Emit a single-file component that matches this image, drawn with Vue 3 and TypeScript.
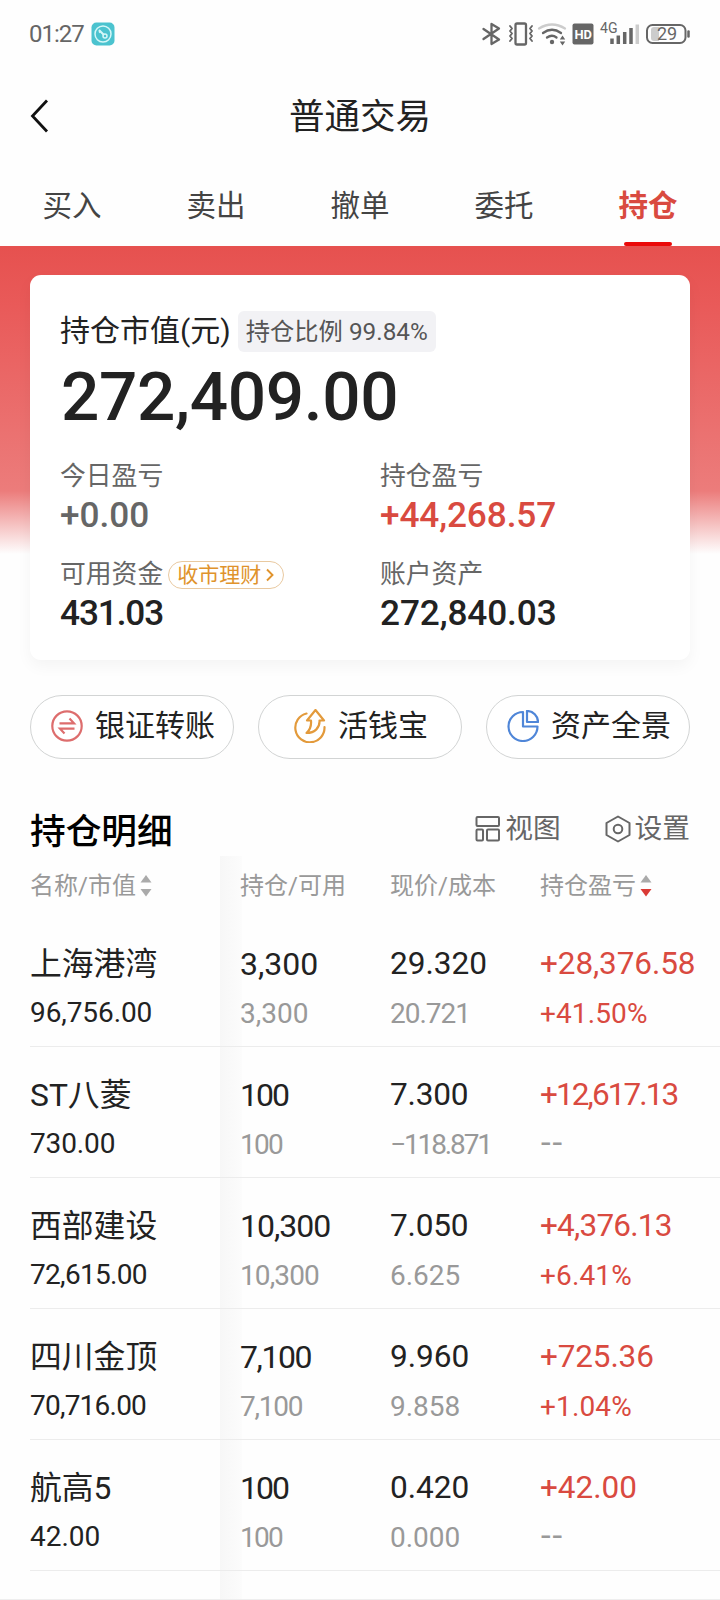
<script setup lang="ts">
interface Holding {
  name: string
  value: string
  amount: string
  usable: string
  price: string
  cost: string
  profit: string
  rate: string
}

interface Stat {
  label: string
  figure: string
  tone: string
  pill?: string
}

const tabs: string[] = ['买入', '卖出', '撤单', '委托', '持仓']
const activeTab = '持仓'

const stats: Stat[] = [
  { label: '今日盈亏', figure: '+0.00', tone: 'muted' },
  { label: '持仓盈亏', figure: '+44,268.57', tone: 'red' },
  { label: '可用资金', figure: '431.03', tone: '', pill: '收市理财' },
  { label: '账户资产', figure: '272,840.03', tone: '' },
]

const holdings: Holding[] = [
  { name: '上海港湾', value: '96,756.00', amount: '3,300', usable: '3,300', price: '29.320', cost: '20.721', profit: '+28,376.58', rate: '+41.50%' },
  { name: 'ST八菱', value: '730.00', amount: '100', usable: '100', price: '7.300', cost: '−118.871', profit: '+12,617.13', rate: '--' },
  { name: '西部建设', value: '72,615.00', amount: '10,300', usable: '10,300', price: '7.050', cost: '6.625', profit: '+4,376.13', rate: '+6.41%' },
  { name: '四川金顶', value: '70,716.00', amount: '7,100', usable: '7,100', price: '9.960', cost: '9.858', profit: '+725.36', rate: '+1.04%' },
  { name: '航高5', value: '42.00', amount: '100', usable: '100', price: '0.420', cost: '0.000', profit: '+42.00', rate: '--' },
]

function tracking(text: string) {
  const ones = text.split('1').length - 1
  const sevens = text.split('7').length - 1
  let extra = -ones * 0.19 - sevens * 0.03
  if (text.endsWith('%')) extra += 0.22
  return { letterSpacing: `${(extra / text.length).toFixed(4)}em` }
}
</script>

<template>
  <div class="screen">
    <div class="status">
      <span class="time">01:27</span>
      <svg class="app-badge" viewBox="0 0 24 24" width="24" height="24">
        <rect x="0.5" y="0.5" width="23" height="23" rx="5" fill="#4bc3cf" />
        <circle cx="12" cy="12" r="8" fill="none" stroke="#d5f7f8" stroke-width="1.5" />
        <path d="M8 8l5 5M8 10.500l2-1.500" stroke="#d5f7f8" stroke-width="2" fill="none" />
        <circle cx="14" cy="14" r="2" stroke="#d5f7f8" stroke-width="1.500" fill="none" />
      </svg>
      <svg class="signals" viewBox="480 18 212 30" width="212" height="30" fill="none" stroke="#666" stroke-width="2.3" stroke-linecap="round" stroke-linejoin="round">
        <path d="M483.500 28L499 38.500L491.500 43V23L499 27.500L483.500 38" />
        <rect x="515.500" y="22.500" width="10.500" height="21" rx="1.500" />
        <path d="M510 25l2 2.500l-2 2.500l2 2.500l-2 2.500l2 2.500l-2 2.500M532 25l-2 2.500l2 2.500l-2 2.500l2 2.500l-2 2.500l2 2.500" stroke-width="1.900" />
        <path d="M539 27.500q13-8 26 0" stroke="#ccc" />
        <path d="M543 32q9-6.500 18 0M547 36.500q5-3.500 9.500 0" />
        <circle cx="552" cy="41" r="2.200" fill="#666" stroke="none" />
        <path d="M562.500 34.500l2.700 4h-5.400zM562.500 44.500l2.700-4h-5.400z" fill="#666" stroke="none" />
        <rect x="572.500" y="22.500" width="21" height="21" rx="2" fill="#666" stroke="none" />
        <path d="M612 37.500v5.500M618.300 34.500v8.500M624.700 31v12M631 27v16" stroke-width="3.500" stroke-linecap="butt" />
        <path d="M637.300 23.500v19.500" stroke="#ccc" stroke-width="3.500" stroke-linecap="butt" />
        <path d="M659 26v14h-5q-3 0-3-3v-8q0-3 3-3z" fill="#ccc" stroke="none" />
        <rect x="647" y="24" width="38.500" height="18" rx="5.500" stroke-width="2" />
        <path d="M688.500 30.500v5" stroke-width="2.500" />
        <text x="574.500" y="37.800" font-size="13.500" font-weight="700" fill="#fff" stroke="none" textLength="17.500" lengthAdjust="spacingAndGlyphs">HD</text>
        <text x="600" y="32" font-size="14" fill="#666" stroke="none" textLength="17.500" lengthAdjust="spacingAndGlyphs">4G</text>
        <text x="657" y="39.200" font-size="18" fill="#666" stroke="none" textLength="20">29</text>
      </svg>
    </div>

    <header class="nav">
      <svg class="back" viewBox="0 0 20 34" width="20" height="34">
        <path d="M17 1.500L2.500 17L17 32.500" fill="none" stroke="#111" stroke-width="2.800" />
      </svg>
      <h1>普通交易</h1>
    </header>

    <nav class="tabs">
      <div v-for="t in tabs" :key="t" class="tab" :class="{ active: t === activeTab }">{{ t }}</div>
    </nav>

    <section class="hero">
      <div class="card">
        <div class="line-one">
          <span class="caption">持仓市值(元)</span>
          <span class="ratio">持仓比例 99.84%</span>
        </div>
        <div class="total">272,409.00</div>
        <div class="stats">
          <div v-for="s in stats" :key="s.label" class="stat">
            <div class="label">
              {{ s.label }}
              <span v-if="s.pill" class="pill">{{ s.pill }}
                <svg viewBox="0 0 8 14" width="8" height="14"><path d="M1 1.500l5.500 5.500l-5.500 5.500" fill="none" stroke="#e0932c" stroke-width="1.900" /></svg>
              </span>
            </div>
            <div class="figure" :class="s.tone" :style="tracking(s.figure)">{{ s.figure }}</div>
          </div>
        </div>
      </div>
    </section>

    <div class="actions">
      <button class="action">
        <svg class="raised" viewBox="0 0 32 32" width="32" height="32" fill="none" stroke="#dd6d6d" stroke-width="2.200">
          <circle cx="16" cy="16" r="14.700" />
          <path d="M8.500 13.300h14.500l-4.500-4.800M23.500 18.700h-14.500l4.500 4.800" />
        </svg>
        <span>银证转账</span>
      </button>
      <button class="action">
        <svg class="raised" viewBox="0 0 32 34" width="32" height="34" fill="none" stroke="#e39a3b" stroke-width="2.200" stroke-linecap="round" stroke-linejoin="round">
          <path d="M12.500 4.500A14.600 14.600 0 1 0 30.500 18" />
          <path d="M21.500 1l8.500 10.500h-4.500c.5 7-4.500 12.500-13 12.500c4-3.500 5-7 4.500-12.500h-4z" />
        </svg>
        <span>活钱宝</span>
      </button>
      <button class="action">
        <svg class="raised" viewBox="0 0 32 32" width="32" height="32" fill="none" stroke="#4f86d8" stroke-width="2.200" stroke-linejoin="round">
          <path d="M16 2A14.500 14.500 0 1 0 30.500 16.500H16z" />
          <path d="M20 1v11h11A11 11 0 0 0 20 1z" />
        </svg>
        <span>资产全景</span>
      </button>
    </div>

    <div class="section-head">
      <h2>持仓明细</h2>
      <div class="tool">
        <svg viewBox="0 0 26 28" width="26" height="28" fill="none" stroke="#666" stroke-width="2">
          <rect x="1.500" y="2" width="22.500" height="9" rx="1" />
          <rect x="1.500" y="14.500" width="6.500" height="11" rx="1" />
          <rect x="12" y="14.500" width="12" height="11" rx="1" />
        </svg>
        <span>视图</span>
      </div>
      <div class="tool last">
        <svg viewBox="0 0 26 28" width="26" height="28" fill="none" stroke="#666" stroke-width="2" stroke-linejoin="round">
          <path d="M13 1.500l11.500 6.500v12l-11.500 6.500l-11.500-6.500v-12z" />
          <circle cx="13" cy="14" r="4.300" />
        </svg>
        <span>设置</span>
      </div>
    </div>

    <section class="table">
      <div class="row head">
        <div class="th"><span>名称/市值</span>
          <svg viewBox="0 0 12 22" width="12" height="22"><path d="M6 0l5.500 7.500h-11z" fill="#aaa" /><path d="M6 21.500l5.500-7.500h-11z" fill="#aaa" /></svg>
        </div>
        <div class="th"><span>持仓/可用</span></div>
        <div class="th"><span>现价/成本</span></div>
        <div class="th"><span>持仓盈亏</span>
          <svg viewBox="0 0 12 22" width="12" height="22"><path d="M6 0l5.500 7.500h-11z" fill="#aaa" /><path d="M6 21.500l5.500-7.500h-11z" fill="#da3a35" /></svg>
        </div>
      </div>
      <div v-for="h in holdings" :key="h.name" class="row">
        <div class="cell">
          <div class="main name">{{ h.name }}</div>
          <div class="sub dark" :style="tracking(h.value)">{{ h.value }}</div>
        </div>
        <div class="cell">
          <div class="main" :style="tracking(h.amount)">{{ h.amount }}</div>
          <div class="sub" :style="tracking(h.usable)">{{ h.usable }}</div>
        </div>
        <div class="cell">
          <div class="main price" :style="tracking(h.price)">{{ h.price }}</div>
          <div class="sub" :style="tracking(h.cost)">{{ h.cost }}</div>
        </div>
        <div class="cell">
          <div class="main profit red" :style="tracking(h.profit)">{{ h.profit }}</div>
          <div v-if="h.rate === '--'" class="sub empty">{{ h.rate }}</div>
          <div v-else class="sub red" :style="tracking(h.rate)">{{ h.rate }}</div>
        </div>
      </div>
    </section>
  </div>
</template>

<style>
body {
  margin: 0;
  background: #fefefe;
}
</style>

<style scoped>
.screen {
  width: 720px;
  height: 1600px;
  overflow: hidden;
  background: #fefefe;
  color: #222;
  font-family: Roboto, 'Noto Sans CJK SC', sans-serif;
  white-space: nowrap;
}
.screen svg {
  display: block;
  flex: none;
}
.status {
  height: 70px;
  box-sizing: border-box;
  padding: 0 28px 2px 29px;
  display: flex;
  align-items: center;
}
.time {
  width: 62px;
  font-size: 24px;
  letter-spacing: -1px;
  color: #666;
}
.signals {
  margin-left: auto;
}
.nav {
  height: 92px;
  display: flex;
  align-items: center;
  justify-content: center;
  position: relative;
}
.back {
  position: absolute;
  left: 30px;
  top: 29px;
}
h1 {
  margin: 0;
  padding-top: 2px;
  font-size: 35.5px;
  font-weight: 400;
  line-height: 50px;
}
.tabs {
  height: 84px;
  display: grid;
  grid-template-columns: repeat(5, 1fr);
}
.tab {
  position: relative;
  height: 84px;
  text-align: center;
  font-size: 29.5px;
  line-height: 89px;
  color: #444;
}
.tab.active {
  color: #d94a40;
  font-weight: 700;
}
.tab.active::after {
  content: '';
  position: absolute;
  left: 48px;
  right: 48px;
  bottom: 0;
  height: 4px;
  border-radius: 2px;
  background: #ea0a0a;
}
.hero {
  padding: 29px 30px 35px;
  background: linear-gradient(180deg, #e6514f 0, #e95a59 60px, #ec7c7b 245px, #fefefe 308px);
}
.card {
  height: 385px;
  box-sizing: border-box;
  padding: 31px 30px 0;
  border-radius: 11px;
  background: #fff;
  box-shadow: 0 6px 16px rgba(0, 0, 0, 0.045);
}
.line-one {
  display: flex;
  align-items: center;
  gap: 7px;
  height: 50px;
}
.caption {
  font-size: 30px;
  line-height: 36px;
  padding-bottom: 1px;
}
.ratio {
  height: 41px;
  line-height: 41px;
  padding: 0 8px;
  border-radius: 6px;
  background: #f2f2f5;
  font-size: 24.3px;
  color: #555;
}
.total {
  height: 82px;
  line-height: 82px;
  padding-left: 1px;
  font-size: 67.5px;
  font-weight: 500;
  letter-spacing: -0.35px;
}
.stats {
  display: grid;
  grid-template-columns: 320px 1fr;
  padding-top: 15px;
  row-gap: 18px;
}
.label {
  height: 40px;
  box-sizing: border-box;
  padding-top: 5px;
  display: flex;
  align-items: center;
  font-size: 25.8px;
  line-height: 30px;
  color: #666;
}
.figure {
  height: 40px;
  line-height: 42px;
  padding-top: 1px;
  box-sizing: border-box;
  font-size: 35.2px;
  font-weight: 500;
}
.muted {
  color: #666;
}
.red {
  color: #d94a40;
}
.pill {
  display: flex;
  align-items: center;
  gap: 5px;
  margin: 2px 0 0 5px;
  height: 26px;
  padding: 0 9px 0 8px;
  border: 1px solid #e9c9a0;
  border-radius: 14px;
  font-size: 21px;
  line-height: 26px;
  color: #e0932c;
}
.actions {
  display: grid;
  grid-template-columns: repeat(3, 204px);
  justify-content: space-between;
  padding: 0 30px;
}
.action {
  height: 64px;
  display: flex;
  align-items: center;
  justify-content: center;
  gap: 12px;
  padding: 0 0 0 2px;
  border: 1px solid #d2d4d4;
  border-radius: 32px;
  background: #fff;
  color: #222;
  font: 30px/1 Roboto, 'Noto Sans CJK SC', sans-serif;
}
.action span {
  padding-bottom: 2px;
}
.action .raised {
  margin-bottom: 2px;
}
.section-head {
  height: 97px;
  box-sizing: border-box;
  padding: 42px 30px 0;
  display: flex;
  align-items: flex-start;
}
h2 {
  margin: 0 auto 0 0;
  padding-top: 1px;
  font-size: 35.7px;
  line-height: 60px;
  font-weight: 500;
  color: #000;
}
.tool {
  display: flex;
  align-items: center;
  gap: 4px;
  height: 56px;
  font-size: 27.7px;
  color: #666;
}
.tool span {
  line-height: 34px;
}
.tool.last {
  margin-left: 44px;
}
.table {
  height: 743px;
  padding-left: 30px;
  border-bottom: 1px solid #eee;
  background: linear-gradient(90deg, #f7f7f7, #fcfcfc) 220px 0 / 22px 100% no-repeat;
}
.row {
  display: grid;
  grid-template-columns: 210px 150px 150px 180px;
  height: 131px;
  box-sizing: border-box;
  padding-top: 24px;
  border-bottom: 1px solid #ececec;
}
.row.head {
  height: 60px;
  padding: 0;
  border: 0;
}
.th {
  display: flex;
  align-items: center;
  gap: 4px;
  font-size: 24px;
  line-height: 30px;
  color: #999;
}
.th span {
  padding-bottom: 1px;
}
.main {
  height: 48px;
  line-height: 48px;
  font-size: 32px;
}
.name {
  font-size: 31.8px;
}
.price {
  font-size: 31.6px;
}
.profit {
  font-size: 31.5px;
}
.sub {
  height: 50px;
  line-height: 51px;
  font-size: 28px;
  color: #999;
}
.sub.dark {
  line-height: 50px;
  color: #222;
}
.sub.red {
  color: #d94a40;
}
.sub.empty {
  font-family: 'DejaVu Sans', sans-serif;
  font-size: 32px;
  line-height: 46px;
}
</style>
